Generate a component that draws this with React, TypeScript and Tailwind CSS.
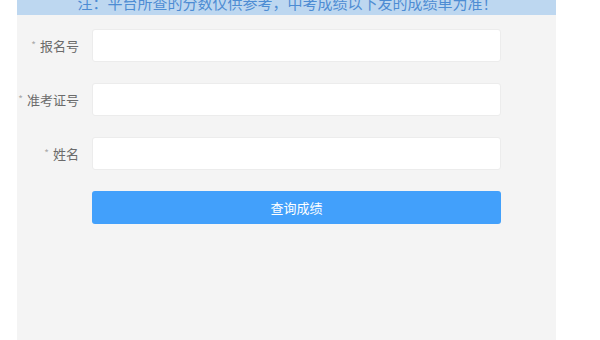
import React from "react";

const font = { fontFamily: '"Noto Sans CJK SC", "Noto Sans", sans-serif' };

function Row({ label }: { label: string }) {
  return (
    <div className="flex items-center h-[33px]">
      <div className="w-[62px] flex justify-end items-center text-[13px] text-[#6b6b6b] leading-none">
        <span className="text-[#aaa] text-[10px] mr-[4px] -mt-[1px]">*</span>
        <span>{label}</span>
      </div>
      <div className="ml-[13px] w-[409px] h-[33px] bg-white border border-[#ececec] rounded-[3px]" />
    </div>
  );
}

export default function App() {
  return (
    <div className="w-[600px] h-[340px] bg-white overflow-hidden" style={font}>
      <div className="ml-[17px] w-[539px] h-[340px] bg-[#f4f4f4] flex flex-col">
        <div className="h-[15px] bg-[#bdd7f0] overflow-hidden flex justify-center">
          <div className="text-[15px] leading-[15px] -mt-[5px] pl-[2px] text-[#4d8cd3] whitespace-nowrap">
            注：平台所查的分数仅供参考，中考成绩以下发的成绩单为准！
          </div>
        </div>
        <div className="mt-[14px] flex flex-col gap-[21px]">
          <Row label="报名号" />
          <Row label="准考证号" />
          <Row label="姓名" />
          <div className="flex">
            <div className="w-[62px]" />
            <div className="ml-[13px] w-[409px] h-[33px] bg-[#42a0fb] rounded-[3px] flex items-center justify-center text-white text-[13px]">
              查询成绩
            </div>
          </div>
        </div>
        <div className="flex-1" />
      </div>
    </div>
  );
}
